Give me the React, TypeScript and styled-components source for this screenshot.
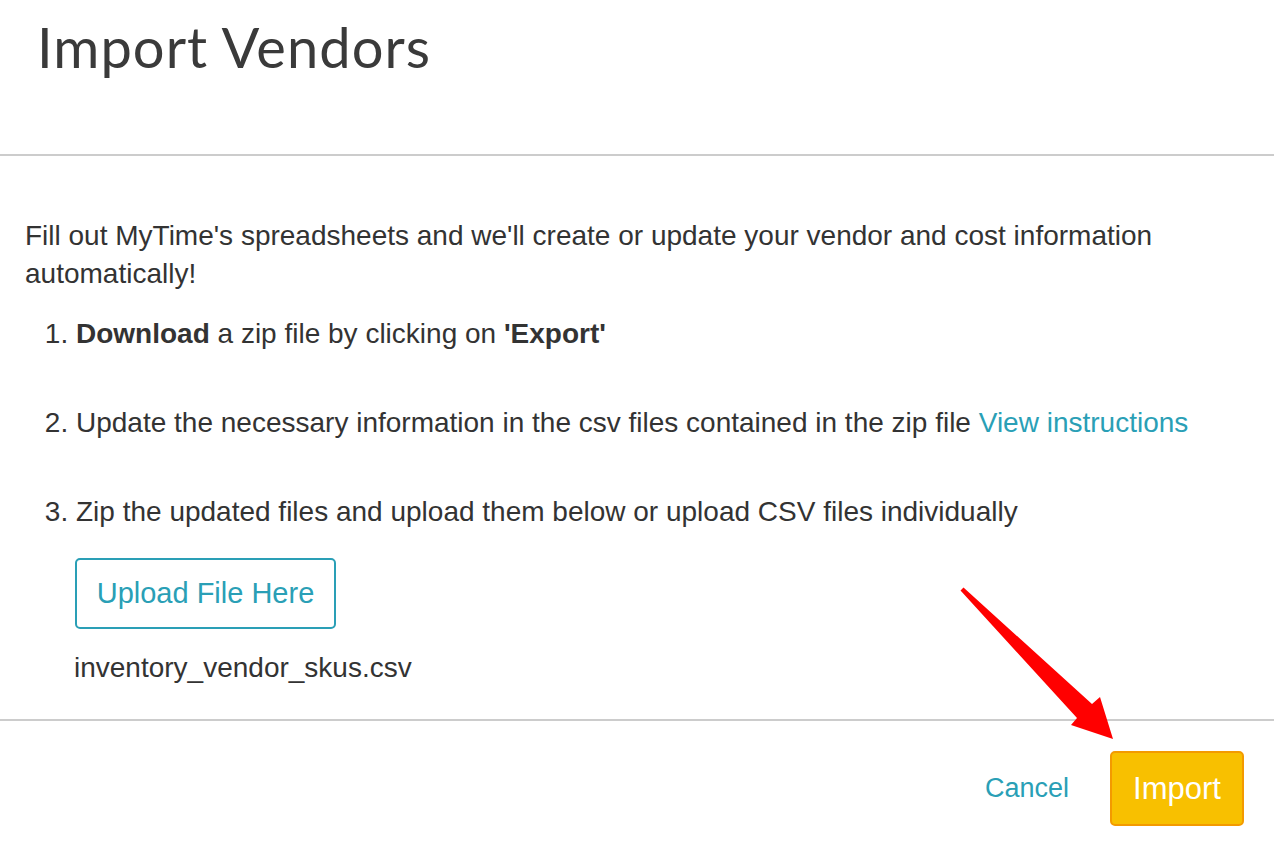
import React from "react";
import styled, { createGlobalStyle } from "styled-components";

const GlobalStyle = createGlobalStyle`
  html, body { margin: 0; padding: 0; background: #ffffff; }
  body { font-family: "Liberation Sans", Arial, sans-serif; color: #333333; }
  * { box-sizing: border-box; }
`;

const Page = styled.div`
  position: relative;
  width: 1282px;
  height: 848px;
  overflow: hidden;
  background: #ffffff;
`;

const Modal = styled.div`
  width: 1274px;
  display: flex;
  flex-direction: column;
`;

const Header = styled.header`
  height: 156px;
  padding: 19px 37px 0;
  border-bottom: 2px solid #cccccc;
`;

const Title = styled.h1`
  margin: 0;
  font-family: Lato, "Open Sans", sans-serif;
  font-weight: 400;
  font-size: 56px;
  letter-spacing: 1.05px;
  line-height: 1;
  color: #3a3a3a;
`;

const Body = styled.section`
  height: 563px;
  padding: 61px 25px 0;
  font-size: 28px;
  line-height: 38px;
  color: #333333;
`;

const Intro = styled.p`
  margin: 0 0 22px;
`;

const Steps = styled.ol`
  margin: 0;
  padding: 0 0 0 51px;
`;

const Step = styled.li`
  margin: 0 0 51px;
  &:last-child { margin-bottom: 0; }
`;

const Link = styled.a`
  color: #2a9fb6;
  text-decoration: none;
`;

const UploadButton = styled.button`
  display: block;
  margin: 27px 0 0 -1px;
  width: 261px;
  height: 71px;
  padding: 0;
  background: #ffffff;
  border: 2px solid #2a9fb6;
  border-radius: 5px;
  color: #2a9fb6;
  font-family: "Liberation Sans", Arial, sans-serif;
  font-size: 29px;
  cursor: pointer;
`;

const FileName = styled.div`
  margin-top: 20px;
  margin-left: -2px;
`;

const Footer = styled.footer`
  border-top: 2px solid #cccccc;
  padding: 30px 30px 0 0;
  display: flex;
  justify-content: flex-end;
  align-items: center;
  gap: 41px;
`;

const CancelLink = styled.a`
  color: #2a9fb6;
  font-size: 27px;
  text-decoration: none;
  cursor: pointer;
`;

const ImportButton = styled.button`
  width: 134px;
  height: 75px;
  background: #f8c000;
  border: 2px solid #f39a00;
  border-radius: 5px;
  color: #ffffff;
  font-family: "Liberation Sans", Arial, sans-serif;
  font-size: 31px;
  cursor: pointer;
`;

const Annotation = styled.svg`
  position: absolute;
  left: 0;
  top: 0;
  pointer-events: none;
`;

export default function App() {
  return (
    <>
      <GlobalStyle />
      <Page>
        <Modal>
          <Header>
            <Title>Import Vendors</Title>
          </Header>
          <Body>
            <Intro>
              Fill out MyTime's spreadsheets and we'll create or update your vendor and cost information automatically!
            </Intro>
            <Steps>
              <Step>
                <b>Download</b> a zip file by clicking on <b>'Export'</b>
              </Step>
              <Step>
                Update the necessary information in the csv files contained in the zip file{" "}
                <Link href="#">View instructions</Link>
              </Step>
              <Step>
                Zip the updated files and upload them below or upload CSV files individually
                <UploadButton>Upload File Here</UploadButton>
                <FileName>inventory_vendor_skus.csv</FileName>
              </Step>
            </Steps>
          </Body>
          <Footer>
            <CancelLink>Cancel</CancelLink>
            <ImportButton>Import</ImportButton>
          </Footer>
        </Modal>
        <Annotation width="1282" height="848" viewBox="0 0 1282 848">
          <polygon
            points="960.5,590.5 963.5,587.5 1092,704 1100,697 1113,739 1071,725 1077,718"
            fill="#ff0000"
            strokeLinejoin="round"
          />
        </Annotation>
      </Page>
    </>
  );
}
